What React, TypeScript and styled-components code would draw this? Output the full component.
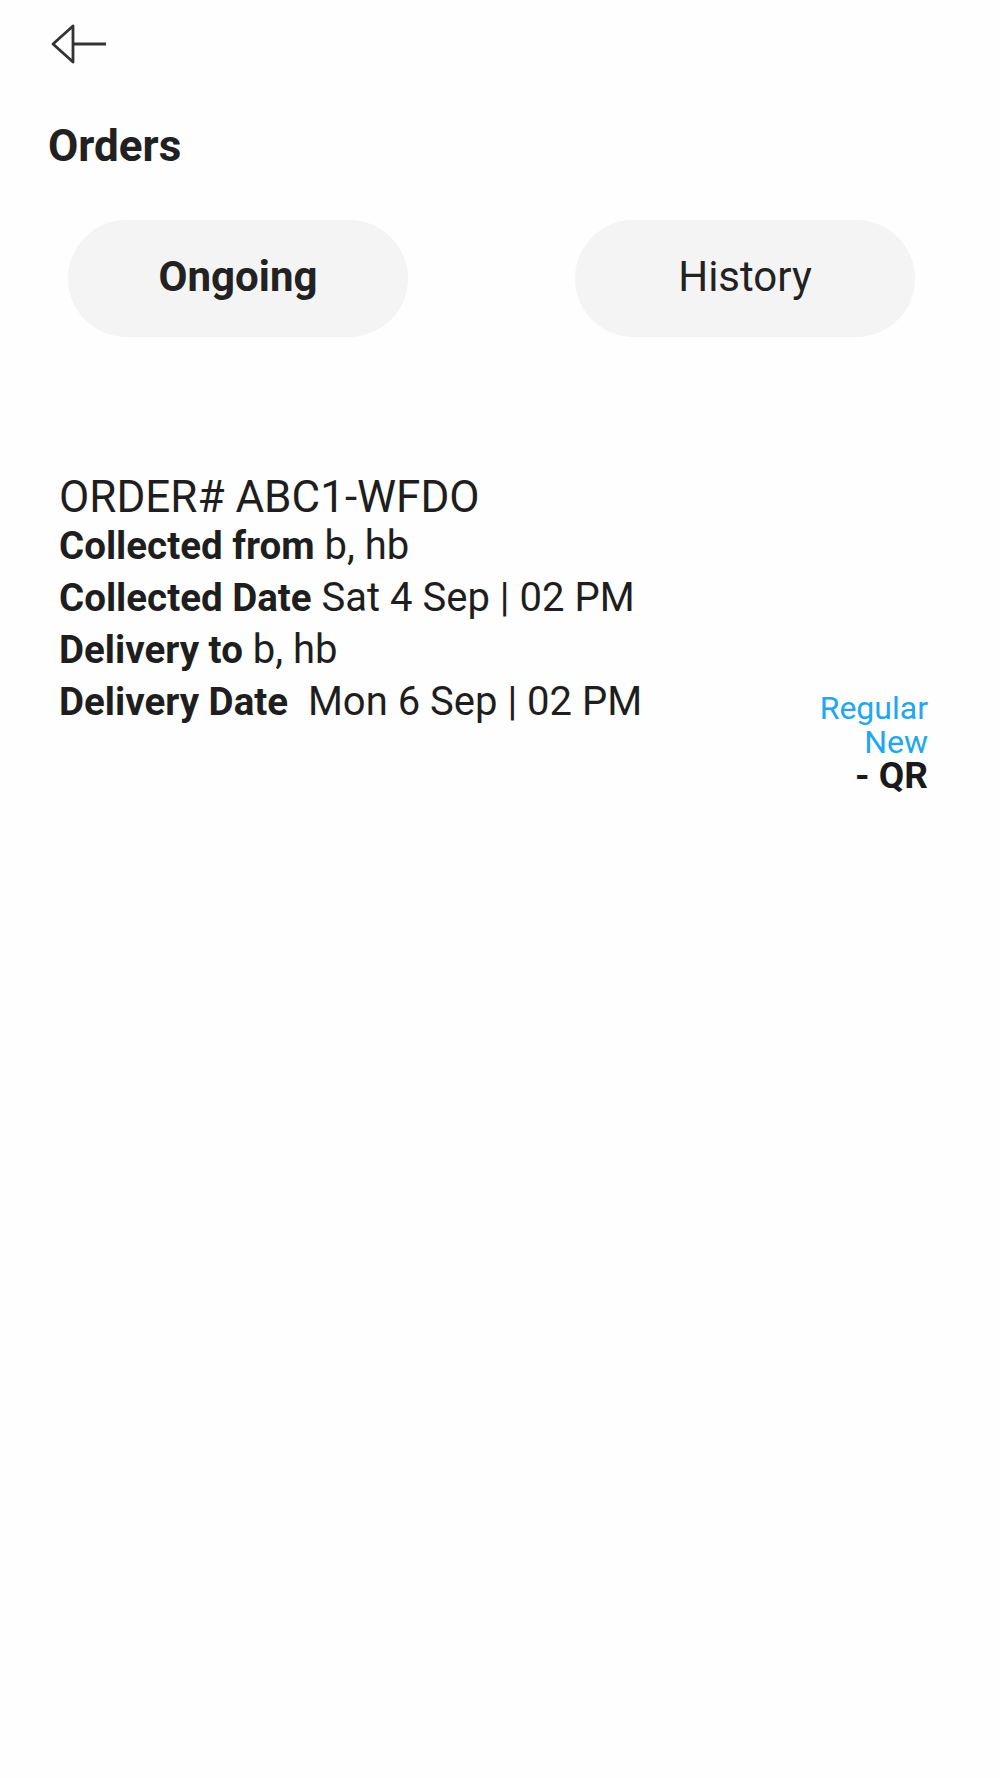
import React from "react";
import styled, { createGlobalStyle } from "styled-components";

const GlobalStyle = createGlobalStyle`
  body {
    margin: 0;
    background: #ffffff;
    font-family: Roboto, "Liberation Sans", sans-serif;
    color: #212121;
  }
`;

const Page = styled.div`
  width: 1000px;
  min-height: 1778px;
  background: #fefefe;
`;

const TopBar = styled.div`
  padding: 22px 0 0 48px;
  height: 44px;
`;

const BackButton = styled.button`
  border: none;
  background: none;
  padding: 0;
  width: 60px;
  height: 44px;
  display: block;
  cursor: pointer;
`;

const Title = styled.h1`
  margin: 58px 0 0 48px;
  font-size: 44px;
  line-height: 44px;
  font-weight: 700;
  color: #212121;
`;

const Tabs = styled.div`
  display: flex;
  justify-content: space-between;
  padding: 0 85px 0 68px;
  margin-top: 52px;
`;

const Tab = styled.button<{ $active?: boolean }>`
  width: 340px;
  height: 117px;
  padding: 0 0 4px;
  border: none;
  border-radius: 59px;
  background: #f4f4f4;
  font-family: Roboto, "Liberation Sans", sans-serif;
  font-size: 42px;
  font-weight: ${(p) => (p.$active ? 700 : 400)};
  color: #222222;
  cursor: pointer;
`;

const OrderCard = styled.div`
  display: flex;
  justify-content: space-between;
  align-items: flex-start;
  padding: 0 72px 0 59px;
  margin-top: 137px;
`;

const Details = styled.div`
  display: flex;
  flex-direction: column;
`;

const OrderNumber = styled.div`
  font-size: 44px;
  line-height: 46px;
  font-weight: 400;
  color: #1e1e1e;
`;

const Line = styled.div`
  font-size: 40px;
  line-height: 52px;
  color: #1e1e1e;
  white-space: pre;
`;

const Label = styled.span`
  font-weight: 700;
  font-size: 38.5px;
`;

const Tags = styled.div`
  margin-top: 217px;
  display: flex;
  flex-direction: column;
  align-items: flex-end;
  text-align: right;
`;

const Tag = styled.div<{ $strong?: boolean }>`
  font-size: ${(p) => (p.$strong ? "37px" : "32px")};
  line-height: 34px;
  font-weight: ${(p) => (p.$strong ? 700 : 400)};
  color: ${(p) => (p.$strong ? "#1a1a1a" : "#23a6ee")};
  white-space: pre;
`;

interface Order {
  id: string;
  collectedFrom: string;
  collectedDate: string;
  deliveryTo: string;
  deliveryDate: string;
  plan: string;
  kind: string;
  code: string;
}

const order: Order = {
  id: "ABC1-WFDO",
  collectedFrom: "b, hb",
  collectedDate: "Sat 4 Sep | 02 PM",
  deliveryTo: "b, hb",
  deliveryDate: "Mon 6 Sep | 02 PM",
  plan: "Regular",
  kind: "New",
  code: "- QR",
};

function BackArrow() {
  return (
    <svg width="60" height="44" viewBox="0 0 60 44" fill="none">
      <path
        d="M25 4 L5 22 L25 40 Z"
        stroke="#333"
        strokeWidth="2.8"
        strokeLinejoin="round"
      />
      <path d="M25 22 L58 22" stroke="#333" strokeWidth="3.2" />
    </svg>
  );
}

export default function App() {
  return (
    <>
      <GlobalStyle />
      <Page>
        <TopBar>
          <BackButton aria-label="Back">
            <BackArrow />
          </BackButton>
        </TopBar>
        <Title>Orders</Title>
        <Tabs>
          <Tab $active>Ongoing</Tab>
          <Tab>History</Tab>
        </Tabs>
        <OrderCard>
          <Details>
            <OrderNumber>ORDER# {order.id}</OrderNumber>
            <Line>
              <Label>Collected from</Label> {order.collectedFrom}
            </Line>
            <Line>
              <Label>Collected Date</Label> {order.collectedDate}
            </Line>
            <Line>
              <Label>Delivery to</Label> {order.deliveryTo}
            </Line>
            <Line>
              <Label>Delivery Date</Label>  {order.deliveryDate}
            </Line>
          </Details>
          <Tags>
            <Tag>{order.plan}</Tag>
            <Tag>{order.kind}</Tag>
            <Tag $strong>{order.code}</Tag>
          </Tags>
        </OrderCard>
      </Page>
    </>
  );
}
